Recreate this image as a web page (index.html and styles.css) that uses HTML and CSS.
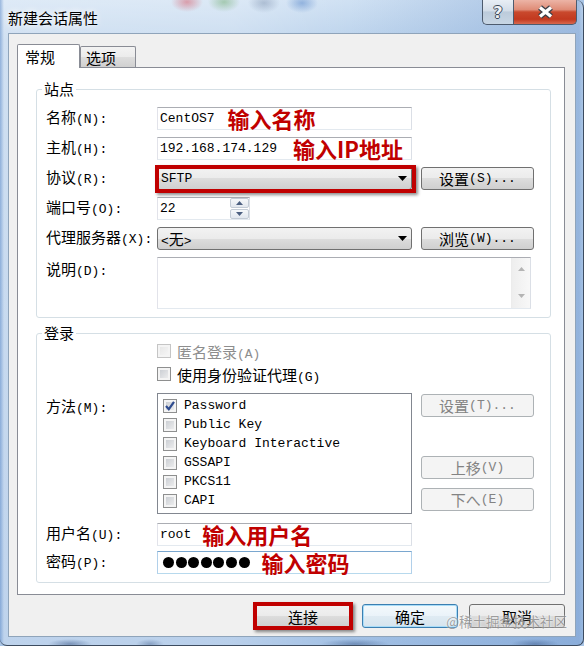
FILE: index.html
```html
<!DOCTYPE html>
<html lang="zh-CN">
<head>
    <meta charset="UTF-8">
    <meta name="viewport" content="width=device-width, initial-scale=1.0">
    <title>新建会话属性</title>
    <link rel="stylesheet" href="styles.css">
</head>
<body>
    <div class="window">
        <div class="titlebar">
            <span class="title">新建会话属性</span>
            <div class="caption">
                <span class="cap-btn help">?</span>
                <span class="cap-btn close">
                    <svg width="19" height="14" viewBox="0 0 19 14">
                        <path d="M4 2.5 L15 11.5 M15 2.5 L4 11.5" stroke="#3b3f47" stroke-width="6"/>
                        <path d="M4 2.5 L15 11.5 M15 2.5 L4 11.5" stroke="#fff" stroke-width="3.4"/>
                    </svg>
                </span>
            </div>
        </div>

        <div class="client">
            <div class="tabs">
                <span class="tab active">常规</span>
                <span class="tab">选项</span>
            </div>

            <div class="panel">
                <fieldset class="group">
                    <legend>站点</legend>
                    <div class="row">
                        <span class="lbl">名称<span class="m">(N):</span></span>
                        <div class="text"><span class="m">CentOS7</span><span class="note note-name">输入名称</span></div>
                    </div>
                    <div class="row">
                        <span class="lbl">主机<span class="m">(H):</span></span>
                        <div class="text"><span class="m">192.168.174.129</span><span class="note note-ip">输入IP地址</span></div>
                    </div>
                    <div class="row">
                        <span class="lbl">协议<span class="m">(R):</span></span>
                        <div class="combo">
                            <span class="m">SFTP</span>
                            <svg width="9" height="5" viewBox="0 0 9 5"><path d="M0 0 H9 L4.5 5 Z" fill="#000"/></svg>
                            <span class="hl hl-combo"></span>
                        </div>
                        <span class="btn">设置<span class="m">(S)...</span></span>
                    </div>
                    <div class="row">
                        <span class="lbl">端口号<span class="m">(O):</span></span>
                        <div class="text port">
                            <span class="m">22</span>
                            <div class="spin">
                                <span class="spin-btn"><svg width="7" height="4" viewBox="0 0 7 4"><path d="M0 4 L3.5 0 L7 4 Z" fill="#4c5f80"/></svg></span>
                                <span class="spin-btn"><svg width="7" height="4" viewBox="0 0 7 4"><path d="M0 0 H7 L3.5 4 Z" fill="#4c5f80"/></svg></span>
                            </div>
                        </div>
                    </div>
                    <div class="row">
                        <span class="lbl">代理服务器<span class="m">(X):</span></span>
                        <div class="combo">
                            <span><span class="m">&lt;</span>无<span class="m">&gt;</span></span>
                            <svg width="9" height="5" viewBox="0 0 9 5"><path d="M0 0 H9 L4.5 5 Z" fill="#000"/></svg>
                        </div>
                        <span class="btn">浏览<span class="m">(W)...</span></span>
                    </div>
                    <div class="row row-memo">
                        <span class="lbl">说明<span class="m">(D):</span></span>
                        <div class="memo">
                            <div class="vscroll">
                                <svg width="7" height="4" viewBox="0 0 7 4"><path d="M0 4 L3.5 0 L7 4 Z" fill="#b4b4b4"/></svg>
                                <svg width="7" height="4" viewBox="0 0 7 4"><path d="M0 0 H7 L3.5 4 Z" fill="#b4b4b4"/></svg>
                            </div>
                        </div>
                    </div>
                </fieldset>

                <fieldset class="group login">
                    <legend>登录</legend>
                    <div class="crow dim">
                        <span class="cb off"></span>
                        <span>匿名登录<span class="m">(A)</span></span>
                    </div>
                    <div class="crow">
                        <span class="cb"></span>
                        <span>使用身份验证代理<span class="m">(G)</span></span>
                    </div>
                    <div class="mrow">
                        <span class="lbl">方法<span class="m">(M):</span></span>
                        <div class="list">
                            <div class="item">
                                <span class="cb">
                                    <svg width="12" height="12" viewBox="0 0 12 12"><path d="M2 6 L4.8 9.2 L10 1.8" fill="none" stroke="#2f4c8f" stroke-width="2.2"/></svg>
                                </span>
                                <span class="m">Password</span>
                            </div>
                            <div class="item"><span class="cb"></span><span class="m">Public Key</span></div>
                            <div class="item"><span class="cb"></span><span class="m">Keyboard Interactive</span></div>
                            <div class="item"><span class="cb"></span><span class="m">GSSAPI</span></div>
                            <div class="item"><span class="cb"></span><span class="m">PKCS11</span></div>
                            <div class="item"><span class="cb"></span><span class="m">CAPI</span></div>
                        </div>
                        <div class="side">
                            <span class="btn disabled">设置<span class="m">(T)...</span></span>
                            <span class="btn disabled up">上移<span class="m">(V)</span></span>
                            <span class="btn disabled down">下へ<span class="m">(E)</span></span>
                        </div>
                    </div>
                    <div class="row row-user">
                        <span class="lbl">用户名<span class="m">(U):</span></span>
                        <div class="text"><span class="m">root</span><span class="note note-user">输入用户名</span></div>
                    </div>
                    <div class="row row-pw">
                        <span class="lbl">密码<span class="m">(P):</span></span>
                        <div class="text pw">
                            <span class="dots"><i></i><i></i><i></i><i></i><i></i><i></i><i></i></span>
                            <span class="note note-pw">输入密码</span>
                        </div>
                    </div>
                </fieldset>
            </div>

            <div class="actions">
                <span class="abtn">连接<span class="hl hl-btn"></span></span>
                <span class="abtn default">确定</span>
                <span class="abtn">取消</span>
            </div>

            <span class="watermark">@稀土掘金技术社区</span>
        </div>
    </div>
</body>
</html>
```

FILE: styles.css
```css
* {
    box-sizing: border-box;
}

body {
    margin: 0;
    width: 584px;
    height: 646px;
    overflow: hidden;
    font-family: "Noto Sans CJK SC", sans-serif;
    font-size: 15px;
    color: #000;
    background: #a9c5e6;
}

.m {
    font-family: "Liberation Mono", monospace;
    font-size: 13px;
}

/* window frame (aero glass) */
.window {
    width: 584px;
    height: 646px;
    display: flex;
    flex-direction: column;
    border-right: 1px solid #3d4c60;
    border-bottom: 1px solid #3d4c60;
    border-radius: 0 8px 7px 7px;
    overflow: hidden;
    background:
        radial-gradient(ellipse 16px 10px at 187px 2px, rgba(214, 96, 110, .55), transparent),
        radial-gradient(ellipse 16px 10px at 224px 2px, rgba(110, 170, 110, .5), transparent),
        radial-gradient(ellipse 16px 10px at 264px 3px, rgba(120, 140, 170, .45), transparent),
        radial-gradient(ellipse 16px 10px at 302px 3px, rgba(80, 130, 200, .5), transparent),
        radial-gradient(ellipse 22px 5px at 70px 644px, rgba(40, 70, 120, .45), transparent),
        radial-gradient(ellipse 14px 5px at 150px 644px, rgba(40, 70, 120, .35), transparent),
        radial-gradient(ellipse 34px 5px at 355px 644px, rgba(40, 70, 120, .4), transparent),
        radial-gradient(ellipse 24px 5px at 535px 644px, rgba(40, 70, 120, .4), transparent),
        linear-gradient(90deg, rgba(110, 150, 205, .55) 0, rgba(255, 255, 255, .3) 4px, rgba(255, 255, 255, .25) 40%, rgba(255, 255, 255, 0) 60%, rgba(110, 150, 205, .45) calc(100% - 4px), rgba(110, 150, 205, .2)),
        linear-gradient(#d0e1f3, #bcd3ec 40px, #a2c0e4);
}

.titlebar {
    flex: none;
    height: 33px;
    display: flex;
    align-items: flex-start;
}

.title {
    padding: 8px 0 0 8px;
    line-height: 20px;
    text-shadow: 0 0 6px #fff, 0 0 10px rgba(255, 255, 255, .8);
}

.caption {
    margin-left: auto;
    margin-right: 6px;
    display: flex;
}

.cap-btn {
    height: 25px;
    display: flex;
    align-items: center;
    justify-content: center;
    border: 1px solid #4d5b6e;
    border-top: none;
}

.help {
    width: 31px;
    border-right: none;
    border-radius: 0 0 0 5px;
    background: linear-gradient(#e8eef5, #d3dde8 45%, #bccbdb 50%, #c8d6e4);
    font-family: "DejaVu Sans", sans-serif;
    font-weight: bold;
    font-size: 16px;
    color: #eef1f4;
    text-shadow: 1px 0 #3c4858, -1px 0 #3c4858, 0 1px #3c4858, 0 -1px #3c4858;
}

.close {
    width: 64px;
    border-radius: 0 0 5px 0;
    background: linear-gradient(#ecb4a6, #df8c77 40%, #c9492d 50%, #c2391f 80%, #d8684e);
}

/* client area */
.client {
    flex: none;
    position: relative;
    width: 568px;
    height: 604px;
    margin-left: 8px;
    border: 1px solid #8fa4ba;
    background: #f0f0f0;
    display: flex;
    flex-direction: column;
}

.tabs {
    display: flex;
    align-items: flex-end;
    padding: 10px 0 0 8px;
    margin-bottom: -1px;
}

.tab {
    height: 22px;
    display: flex;
    align-items: center;
    padding-left: 5px;
    width: 56px;
    border: 1px solid #898c95;
    border-bottom: none;
    border-radius: 2px 2px 0 0;
    background: linear-gradient(#f3f3f3, #ebebeb 50%, #dddddd 50%, #cfcfcf);
}

.tab.active {
    position: relative;
    z-index: 1;
    height: 24px;
    width: 63px;
    padding-left: 7px;
    background: #fff;
}

.panel {
    height: 528px;
    margin: 0 10px 0 8px;
    border: 1px solid #898c95;
    background: #fff;
    padding: 12px 0 0 18px;
}

/* group boxes */
.group {
    width: 515px;
    margin: 0;
    padding: 9px 0 8px 9px;
    border: 1px solid #d5dfe5;
    border-radius: 3px;
}

.group legend {
    margin-left: -4px;
    padding: 0 2px;
    line-height: 18px;
}

.group.login {
    margin-top: 6px;
    padding-top: 0;
}

.row {
    display: flex;
    align-items: center;
    height: 23px;
}

.row + .row {
    margin-top: 7px;
}

.lbl {
    flex: none;
    width: 111px;
    line-height: 20px;
}

.text {
    width: 255px;
    height: 23px;
    display: flex;
    align-items: center;
    padding-left: 2px;
    border: 1px solid;
    border-color: #abadb3 #dbdfe6 #e3e9ef #e2e3ea;
    background: #fff;
}

.note {
    color: #c00000;
    font-weight: 700;
    font-size: 22px;
    line-height: 23px;
}

.note-name { margin-left: 13px; }
.note-ip { margin-left: 16px; }
.note-user { margin-left: 11px; }
.note-pw { margin-left: 12px; }

.combo {
    position: relative;
    width: 255px;
    height: 23px;
    display: flex;
    align-items: center;
    justify-content: space-between;
    padding: 0 4px 0 3px;
    border: 1px solid #707070;
    border-radius: 3px;
    background: linear-gradient(#f2f2f2, #ebebeb 50%, #dddddd 50%, #cfcfcf);
}

.hl {
    position: absolute;
    border: 4px solid #c00000;
    box-shadow: 2px 2px 3px rgba(0, 0, 0, .45);
}

.hl-combo {
    top: -3px;
    left: -3px;
    right: -5px;
    bottom: -4px;
}

.hl-btn {
    top: -3px;
    left: -3px;
    right: -3px;
    bottom: -3px;
}

.btn {
    flex: none;
    width: 113px;
    height: 23px;
    margin-left: 9px;
    display: flex;
    align-items: center;
    justify-content: center;
    border: 1px solid #707070;
    border-radius: 3px;
    background: linear-gradient(#f2f2f2, #ebebeb 50%, #dddddd 50%, #cfcfcf);
}

.btn.disabled {
    border-color: #adb2b5;
    background: #f4f4f4;
    color: #838383;
}

.text.port {
    width: 93px;
    padding-right: 0;
}

.spin {
    margin-left: auto;
    width: 19px;
    height: 21px;
    display: flex;
    flex-direction: column;
    gap: 1px;
}

.spin-btn {
    flex: 1;
    display: flex;
    align-items: center;
    justify-content: center;
    border: 1px solid #c3cbd5;
    border-radius: 2px;
    background: linear-gradient(#f6f8fa, #e2e7ee);
}

.row-memo {
    height: 52px;
    align-items: flex-start;
}

.row-memo .lbl {
    padding-top: 2px;
}

.memo {
    width: 374px;
    height: 52px;
    display: flex;
    justify-content: flex-end;
    border: 1px solid;
    border-color: #abadb3 #dbdfe6 #e3e9ef #e2e3ea;
    background: #fff;
}

.vscroll {
    width: 19px;
    display: flex;
    flex-direction: column;
    align-items: center;
    justify-content: space-between;
    padding: 9px 0 10px;
    border-left: 1px solid #ececec;
    background: linear-gradient(90deg, #eeeeee, #f8f8f8);
}

/* login group */
.crow {
    display: flex;
    align-items: center;
    gap: 6px;
    height: 18px;
    padding-left: 111px;
}

.crow + .crow {
    margin-top: 5px;
}

.crow.dim {
    color: #8d8d8d;
}

.cb {
    flex: none;
    width: 14px;
    height: 14px;
    display: flex;
    align-items: center;
    justify-content: center;
    border: 1px solid #8e8f8f;
    background: linear-gradient(135deg, #c4c8ce, #f3f3f3);
    box-shadow: inset 0 0 0 2px #f4f4f4;
}

.cb.off {
    border-color: #c5c5c5;
    background: linear-gradient(135deg, #e4e4e4, #f8f8f8);
}

.mrow {
    display: flex;
    align-items: flex-start;
    margin-top: 10px;
}

.mrow .lbl {
    padding-top: 3px;
}

.list {
    flex: none;
    width: 255px;
    height: 121px;
    padding: 2px 5px;
    border: 1px solid #828790;
    background: #fff;
}

.item {
    height: 19px;
    display: flex;
    align-items: center;
    gap: 7px;
}

.side {
    display: flex;
    flex-direction: column;
}

.side .btn {
    margin-top: 1px;
}

.side .btn.up {
    margin-top: 39px;
}

.side .btn.down {
    margin-top: 9px;
}

.row.row-user {
    margin-top: 9px;
}

.row.row-pw {
    margin-top: 5px;
}

.text.pw {
    border-color: #7aa7cf #b1d0ea #b7d9ed #b1d0ea;
    padding-left: 5px;
}

.dots {
    display: flex;
    gap: 1.6px;
}

.dots i {
    width: 11px;
    height: 11px;
    border-radius: 50%;
    background: #000;
}

/* dialog buttons */
.actions {
    display: flex;
    justify-content: flex-end;
    gap: 11px;
    margin: 9px 10px 0 0;
}

.abtn {
    position: relative;
    width: 96px;
    height: 24px;
    display: flex;
    align-items: center;
    justify-content: center;
    border: 1px solid #707070;
    border-radius: 3px;
    background: linear-gradient(#f2f2f2, #ebebeb 50%, #dddddd 50%, #cfcfcf);
}

.abtn.default {
    border-color: #3c7fb1;
    box-shadow: inset 0 0 0 1px #a8dcf8;
    background: linear-gradient(#f4f9fc, #eaf3f9 50%, #dfebf3 50%, #d6e4ee);
}

.watermark {
    position: absolute;
    right: 8px;
    bottom: 6px;
    font-size: 13.5px;
    line-height: 18px;
    color: rgba(120, 120, 120, .7);
    text-shadow: 0 0 2px #fff;
}
```
